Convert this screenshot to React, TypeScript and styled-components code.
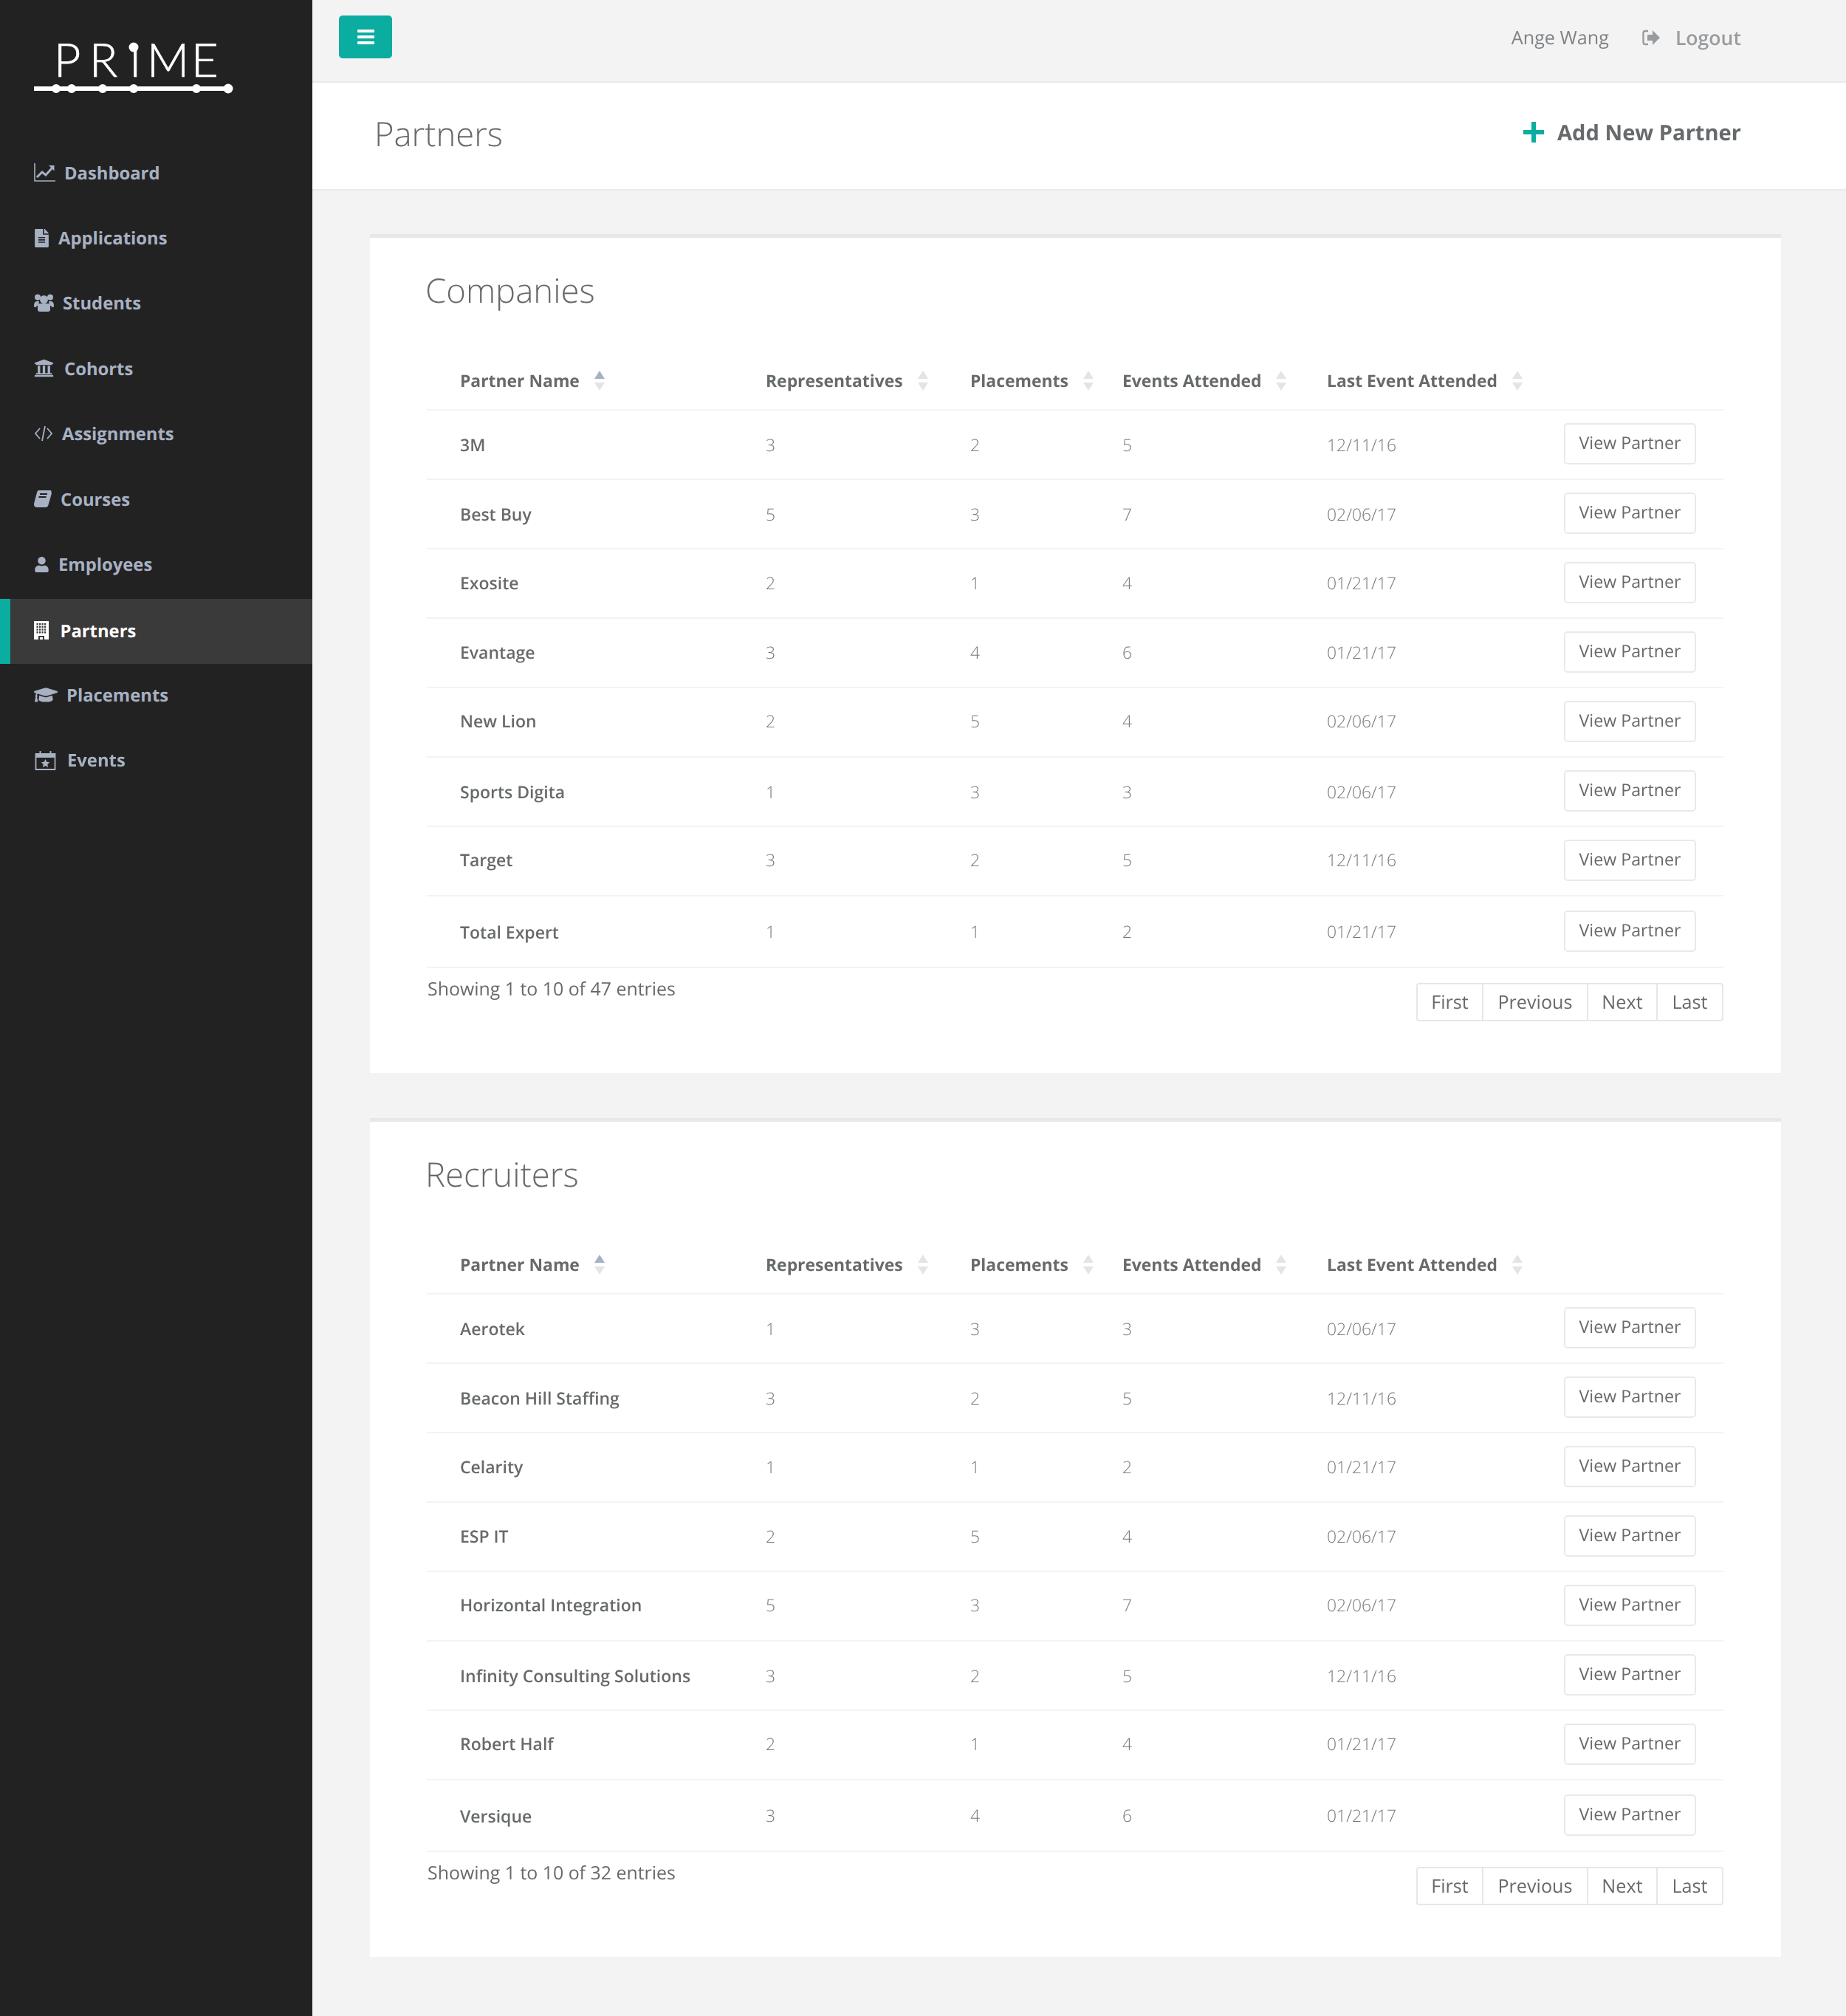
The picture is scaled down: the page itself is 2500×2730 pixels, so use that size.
import React from 'react';
import styled, { createGlobalStyle } from 'styled-components';
import { FaFileAlt, FaUniversity, FaUser, FaGraduationCap } from 'react-icons/fa';

const Global = createGlobalStyle`
  html, body { margin: 0; padding: 0; background: #f3f3f4; }
  body { font-family: "Open Sans", "Liberation Sans", sans-serif; color: #676a6c; text-rendering: geometricPrecision; }
  * { box-sizing: border-box; }
`;

const Shell = styled.div`display: flex; min-height: 2730px; width: 2500px; will-change: opacity;`;
const Sidebar = styled.aside`width: 423px; flex: none; background: #222222;`;
const LogoBox = styled.div`height: 189px; svg { display: block; }`;
const NavList = styled.nav`display: flex; flex-direction: column;`;
const NavItem = styled.a<{ $active?: boolean }>`
  display: flex; align-items: center; height: 88.4px; gap: ${p => p.$active ? '16px' : '12px'};
  padding: ${p => p.$active ? '0 0 2px 31.5px' : '1px 0 0 46px'};
  margin: ${p => p.$active ? '3px 0 -3px' : '0'};
  font-size: 23.8px; font-weight: 700;
  color: ${p => p.$active ? '#ffffff' : '#a7b1c2'};
  background: ${p => p.$active ? '#3a3a3a' : 'transparent'};
  border-left: ${p => p.$active ? '14.5px solid #0aad9f' : '0'};
  svg { flex: none; display: block; }
`;
const IconSlot = styled.span<{ $w: number }>`display: flex; width: ${p => p.$w}px; flex: none;`;

const Main = styled.main`flex: 1; min-width: 0;`;
const Topbar = styled.header`
  height: 112px; border-bottom: 2px solid #e7eaec; display: flex; align-items: center;
  justify-content: space-between; padding: 0 142px 0 36px;
`;
const Toggle = styled.button`
  width: 72px; height: 58px; margin-top: -10px; border: 0; border-radius: 5px; background: #0aad9f;
  display: flex; align-items: center; justify-content: center; padding: 0;
`;
const TopRight = styled.div`display: flex; align-items: center; margin-top: -8px;`;
const UserName = styled.span`color: #7f8284; font-size: 25.2px; font-weight: 500;`;
const Logout = styled.a`display: flex; align-items: center; gap: 21px; margin-left: 45px; color: #999c9e; font-size: 26.6px; font-weight: 600;`;

const Heading = styled.div`
  height: 146px; background: #fff; border-bottom: 2px solid #e7eaec; display: flex;
  justify-content: space-between; align-items: center; padding: 0 142px 0 84px;
`;
const PageTitle = styled.h1`margin: 0 0 6px; font-size: 45.4px; font-weight: 300; color: #676a6c;`;
const AddLink = styled.a`display: flex; align-items: center; gap: 18px; font-size: 29.1px; font-weight: 700; color: #676a6c; margin-bottom: 11px;`;

const Content = styled.div`padding: 59px 88px 78px 78px; display: flex; flex-direction: column; gap: 61px;`;
const Card = styled.section`
  background: #fff; border-top: 5px solid #e7e7e7; padding: 44px 78px 70px 77px;
`;
const CardTitle = styled.h2`margin: 0 0 54px -2px; font-size: 45.5px; line-height: 55px; font-weight: 300; color: #676a6c;`;

const Table = styled.table`width: 100%; border-collapse: collapse; table-layout: fixed;`;
const Th = styled.th`
  height: 80px; padding: 1px 0 0 45px; text-align: left; font-size: 22.9px; font-weight: 700; color: #676a6c;
  border-bottom: 2px solid #f3f3f3; white-space: nowrap;
`;
const HeadInner = styled.span`display: inline-flex; align-items: center; gap: 20px; svg { display: block; }`;
const Row = styled.tr`&:last-child td { height: 97px; }`;
const Td = styled.td<{ $name?: boolean; $up: number }>`
  height: 94px; padding: 0 0 ${p => p.$up}px 45px; font-size: ${p => p.$name ? 23 : 22.9}px; font-weight: ${p => p.$name ? 600 : 300};
  color: ${p => p.$name ? '#676a6c' : '#76797b'}; border-bottom: 2px solid #f3f3f3; white-space: nowrap;
`;
const ActionTd = styled.td`
  height: 94px; padding: 0 37px 2px 0; text-align: right; border-bottom: 2px solid #f3f3f3;
`;
const ViewButton = styled.button`
  width: 179px; height: 56px; border: 2px solid #e7eaec; border-radius: 5px; background: #fff;
  font-family: inherit; font-size: 23.2px; color: #676a6c; padding: 0 0 4px; text-rendering: geometricPrecision;
`;
const Footer = styled.div`display: flex; justify-content: space-between; align-items: flex-start; padding-top: 20px;`;
const Info = styled.div`font-size: 24.9px; line-height: 34px; color: #676a6c; margin-top: -9px; margin-left: 1px;`;
const Pager = styled.div`display: flex; height: 52px; border: 2px solid #e7e7e7; border-radius: 4px;`;
const PageCell = styled.a<{ $w: number }>`
  display: flex; align-items: center; justify-content: center; width: ${p => p.$w}px; font-size: 25.2px; color: #676a6c;
  &:not(:last-child) { border-right: 2px solid #e7e7e7; }
`;

const NC = '#a7b1c2';
const Dash = () => <svg width="29" height="25" viewBox="0 0 29 25"><path d="M1 0v24h28" fill="none" stroke={NC} strokeWidth="1.6"/><path d="M4 19l7-7 5 4 9-10" fill="none" stroke={NC} strokeWidth="3"/><path d="M20 3h7.5v7.5z" fill={NC}/></svg>;
const Users = () => <svg width="27" height="24" viewBox="0 0 27 24" fill={NC}><circle cx="5" cy="4.500" r="4"/><circle cx="22" cy="4.500" r="4"/><circle cx="13.500" cy="7.500" r="5.500"/><path d="M0 16q0-6 4-6h3q-1 3 0 6l-3 0q-1 1-1 2H1q-1 0-1-2zM27 16q0-6-4-6h-3q1 3 0 6l3 0q1 1 1 2h2q1 0 1-2z"/><path d="M8 13h11q3 0 3 5v3q0 3-3 3H8q-3 0-3-3v-3q0-5 3-5z"/></svg>;
const Code = () => <svg width="26" height="22" viewBox="0 0 26 22" fill="none" stroke={NC} strokeWidth="1.8"><path d="M8 4L2 11l6 7M18 4l6 7-6 7M15 1l-4 20"/></svg>;
const Book = () => <svg width="24" height="23" viewBox="0 0 24 23"><path fill={NC} d="M7 0h15q2 0 1.500 2.500L19 19q-.5 2-2 2H5q-2 0-2-1.500T5 18h11q2 0 2.500-2L23 2l1 2-4 14q-1 5-4 5H4q-4 0-4-4 0-1 .5-3L4 3q.5-3 3-3z"/><path d="M8 5h10M6.500 9h10" stroke="#222" strokeWidth="1.800"/></svg>;
const Building = () => <svg width="20" height="25" viewBox="0 0 20 25"><path fill="#fff" d="M0 0h20v25H0z"/>{[0,1,2,3].map(r => [0,1,2,3].map(c => <rect key={`${r}${c}`} x={3.5+c*3.5} y={3+r*3.7} width="2.2" height="2.4" fill="#3a3a3a"/>))}<path d="M6 20h8v5H6z" fill="#3a3a3a"/><path d="M8 22h4v3H8z" fill="#fff"/></svg>;
const Cal = () => <svg width="33" height="27" viewBox="-1.500 0 33 27"><path d="M1 5h26v21H1z" fill="none" stroke={NC} strokeWidth="1.8"/><path d="M1 5h26v5H1z" fill={NC}/><path d="M7 1v6M21 1v6" stroke={NC} strokeWidth="2"/><path d="M14 12l1.800 3.700 4 .5-3 2.800.8 4-3.600-2-3.600 2 .8-4-3-2.800 4-.5z" fill={NC}/></svg>;
const Out = () => <svg width="24" height="22" viewBox="0 0 24 22"><path d="M8 2H4Q1.500 2 1.500 5v12q0 3 2.500 3h4" fill="none" stroke="#999c9e" strokeWidth="2.400"/><path d="M14 1l10 10-10 10v-6H7V7h7z" fill="#999c9e"/></svg>;
const Bars = () => <svg width="23" height="20" viewBox="0 0 23 20" fill="#fff"><rect width="23" height="4" rx="1"/><rect y="8" width="23" height="4" rx="1"/><rect y="16" width="23" height="4" rx="1"/></svg>;
const Plus = () => <svg width="28" height="28" viewBox="0 0 28 28" fill="#0aad9f"><path d="M11 0h6v11h11v6H17v11h-6V17H0v-6h11z"/></svg>;
const Sort = ({ active }: { active?: boolean }) => <svg width="14" height="27" viewBox="0 0 14 27"><path d="M7 0l7 11H0z" fill={active ? '#a7b1c2' : '#e4e4e4'}/><path d="M7 27L0 16h14z" fill="#e4e4e4"/></svg>;

const Logo = () => (
  <svg width="423" height="189" viewBox="0 0 423 189" fill="#fff">
    <text y="104" fontFamily="Lato, sans-serif" fontWeight="300" fontSize="63" stroke="#fff" strokeWidth="0.7" x="73 121 175 199 259">PRIME</text>
    <circle cx="181" cy="64" r="6.500"/>
    <rect x="46" y="117" width="263" height="6"/>
    {[76,97,139,181,266].map(x => <circle key={x} cx={x} cy="120" r="6"/>)}
    <circle cx="309" cy="120" r="6.500"/>
  </svg>
);

const nav: [string, React.ReactNode, boolean?][] = [
  ['Dashboard', <Dash />],
  ['Applications', <FaFileAlt size={25} style={{ width: 21 }} />],
  ['Students', <Users />],
  ['Cohorts', <IconSlot $w={29}><FaUniversity size={27} /></IconSlot>],
  ['Assignments', <Code />],
  ['Courses', <Book />],
  ['Employees', <FaUser size={21} />],
  ['Partners', <Building />, true],
  ['Placements', <FaGraduationCap size={32} />],
  ['Events', <Cal />],
];

const companies = [
  ['3M','3','2','5','12/11/16'],['Best Buy','5','3','7','02/06/17'],['Exosite','2','1','4','01/21/17'],['Evantage','3','4','6','01/21/17'],
  ['New Lion','2','5','4','02/06/17'],['Sports Digita','1','3','3','02/06/17'],['Target','3','2','5','12/11/16'],['Total Expert','1','1','2','01/21/17'],
];
const recruiters = [
  ['Aerotek','1','3','3','02/06/17'],['Beacon Hill Staffing','3','2','5','12/11/16'],['Celarity','1','1','2','01/21/17'],['ESP IT','2','5','4','02/06/17'],
  ['Horizontal Integration','5','3','7','02/06/17'],['Infinity Consulting Solutions','3','2','5','12/11/16'],['Robert Half','2','1','4','01/21/17'],['Versique','3','4','6','01/21/17'],
];
const heads = ['Partner Name','Representatives','Placements','Events Attended','Last Event Attended'];
const widths = [414, 277, 206, 277, 320, 262];
const pages: [string, number][] = [['First',89],['Previous',142],['Next',94],['Last',87]];
const rowUp = [0, 0, 2, 2, 4, 0, 4, 0];

const PartnerCard = ({ title, rows, total }: { title: string; rows: string[][]; total: number }) => (
  <Card>
    <CardTitle>{title}</CardTitle>
    <Table>
      <colgroup>{widths.map((w, i) => <col key={i} style={{ width: w }} />)}</colgroup>
      <thead><tr>
        {heads.map((h, i) => <Th key={h}><HeadInner>{h}<Sort active={i === 0} /></HeadInner></Th>)}
        <Th />
      </tr></thead>
      <tbody>
        {rows.map((r, ri) => (
          <Row key={r[0]}>
            {r.map((c, i) => <Td key={i} $name={i === 0} $up={rowUp[ri]}>{c}</Td>)}
            <ActionTd><ViewButton>View Partner</ViewButton></ActionTd>
          </Row>
        ))}
      </tbody>
    </Table>
    <Footer>
      <Info>Showing 1 to 10 of {total} entries</Info>
      <Pager>{pages.map(([p, w]) => <PageCell key={p} $w={w}>{p}</PageCell>)}</Pager>
    </Footer>
  </Card>
);

export default function App() {
  return (
    <Shell>
      <Global />
      <Sidebar>
        <LogoBox><Logo /></LogoBox>
        <NavList>
          {nav.map(([label, icon, active]) => <NavItem key={label} $active={active}>{icon}{label}</NavItem>)}
        </NavList>
      </Sidebar>
      <Main>
        <Topbar>
          <Toggle><Bars /></Toggle>
          <TopRight><UserName>Ange Wang</UserName><Logout><Out />Logout</Logout></TopRight>
        </Topbar>
        <Heading>
          <PageTitle>Partners</PageTitle>
          <AddLink><Plus />Add New Partner</AddLink>
        </Heading>
        <Content>
          <PartnerCard title="Companies" rows={companies} total={47} />
          <PartnerCard title="Recruiters" rows={recruiters} total={32} />
        </Content>
      </Main>
    </Shell>
  );
}
